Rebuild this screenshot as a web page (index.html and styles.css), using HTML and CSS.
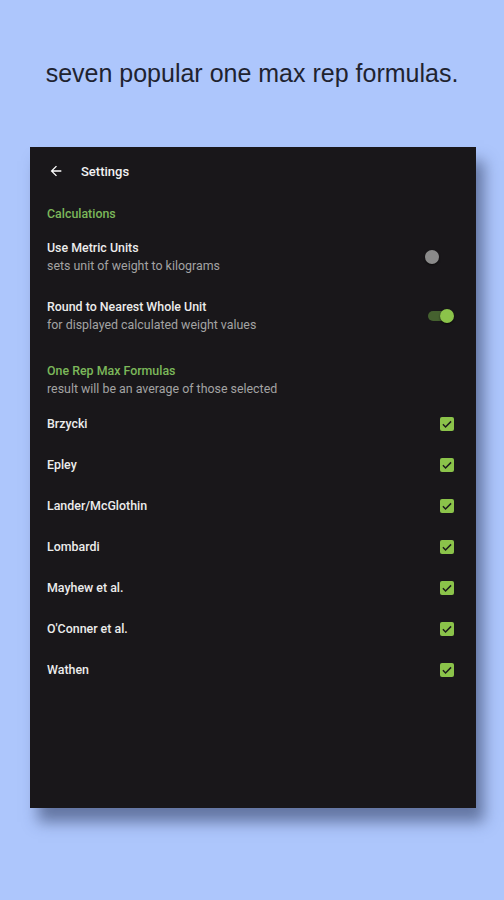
FILE: index.html
```html
<!DOCTYPE html>
<html>
<head>
<meta charset="utf-8">
<link rel="stylesheet" href="styles.css">
</head>
<body>
<div class="page">
  <h1 class="headline">seven popular one max rep formulas.</h1>
  <div class="screen">
    <div class="appbar">
      <svg class="back" width="16" height="16" viewBox="0 0 24 24"><path d="M20 11H7.83l5.59-5.59L12 4l-8 8 8 8 1.41-1.41L7.83 13H20v-2z" fill="#fff"/></svg>
      <span class="title">Settings</span>
    </div>
    <div class="category first">Calculations</div>
    <div class="pref">
      <div class="pref-text">
        <div class="pref-title">Use Metric Units</div>
        <div class="pref-sub">sets unit of weight to kilograms</div>
      </div>
      <div class="toggle"><span class="thumb"></span></div>
    </div>
    <div class="pref">
      <div class="pref-text">
        <div class="pref-title">Round to Nearest Whole Unit</div>
        <div class="pref-sub">for displayed calculated weight values</div>
      </div>
      <div class="toggle on"><span class="thumb"></span></div>
    </div>
    <div class="category second">
      <div>One Rep Max Formulas</div>
      <div class="cat-sub">result will be an average of those selected</div>
    </div>
    <div class="list">
      <div class="check-row"><span>Brzycki</span><span class="box"><svg viewBox="0 0 24 24"><path d="M5 12.5l4.5 4.5L19 7.5" fill="none" stroke="#1c1c1c" stroke-width="2.6"/></svg></span></div>
      <div class="check-row"><span>Epley</span><span class="box"><svg viewBox="0 0 24 24"><path d="M5 12.5l4.5 4.5L19 7.5" fill="none" stroke="#1c1c1c" stroke-width="2.6"/></svg></span></div>
      <div class="check-row"><span>Lander/McGlothin</span><span class="box"><svg viewBox="0 0 24 24"><path d="M5 12.5l4.5 4.5L19 7.5" fill="none" stroke="#1c1c1c" stroke-width="2.6"/></svg></span></div>
      <div class="check-row"><span>Lombardi</span><span class="box"><svg viewBox="0 0 24 24"><path d="M5 12.5l4.5 4.5L19 7.5" fill="none" stroke="#1c1c1c" stroke-width="2.6"/></svg></span></div>
      <div class="check-row"><span>Mayhew et al.</span><span class="box"><svg viewBox="0 0 24 24"><path d="M5 12.5l4.5 4.5L19 7.5" fill="none" stroke="#1c1c1c" stroke-width="2.6"/></svg></span></div>
      <div class="check-row"><span>O'Conner et al.</span><span class="box"><svg viewBox="0 0 24 24"><path d="M5 12.5l4.5 4.5L19 7.5" fill="none" stroke="#1c1c1c" stroke-width="2.6"/></svg></span></div>
      <div class="check-row"><span>Wathen</span><span class="box"><svg viewBox="0 0 24 24"><path d="M5 12.5l4.5 4.5L19 7.5" fill="none" stroke="#1c1c1c" stroke-width="2.6"/></svg></span></div>
    </div>
  </div>
</div>
</body>
</html>
```
FILE: styles.css
```css
html, body {
  margin: 0;
  padding: 0;
  background: #adc6fc;
}
.page {
  width: 504px;
  height: 900px;
  display: flex;
  flex-direction: column;
}
.headline {
  margin: 0;
  height: 147px;
  box-sizing: border-box;
  padding-top: 58px;
  text-align: center;
  font-family: "Liberation Sans", Arial, sans-serif;
  font-weight: normal;
  font-size: 25px;
  line-height: 30px;
  color: #1f2330;
}
.screen {
  margin-left: 30px;
  width: 446px;
  height: 661px;
  background: #19171a;
  box-shadow: 8px 14px 14px rgba(40, 52, 90, 0.55);
  font-family: Roboto, "Noto Sans", sans-serif;
  font-size: 12.4px;
  color: #ececec;
}
.appbar {
  height: 48px;
  display: flex;
  align-items: center;
  padding-left: 49px;
  position: relative;
}
.back {
  position: absolute;
  left: 18px;
  top: 16px;
}
.title {
  padding-left: 2px;
  font-size: 13px;
  font-weight: 500;
  color: #f2f2f2;
}
.category {
  padding-left: 17px;
  color: #7cb85a;
  font-weight: 500;
  line-height: 18px;
}
.category.first {
  padding-top: 10px;
}
.category.second {
  padding-top: 21px;
  padding-bottom: 6px;
}
.cat-sub {
  color: #a3a3a3;
  font-weight: normal;
  line-height: 17px;
}
.pref {
  display: flex;
  align-items: center;
  justify-content: space-between;
  padding: 16px 21px 7px 17px;
}
.pref-title {
  line-height: 18px;
  font-weight: 500;
}
.pref-sub {
  line-height: 18px;
  color: #a3a3a3;
}
.toggle {
  position: relative;
  width: 30px;
  height: 14px;
}
.thumb {
  position: absolute;
  left: 0;
  top: 0;
  width: 14px;
  height: 14px;
  border-radius: 50%;
  background: #8a8a8a;
  box-shadow: 0 1px 2px rgba(0,0,0,0.6);
}
.toggle.on::before {
  content: "";
  position: absolute;
  left: 3px;
  top: 2px;
  width: 24px;
  height: 10px;
  border-radius: 5px;
  background: #45612f;
}
.toggle.on .thumb {
  left: 15px;
  background: #8bc34a;
}
.list {
  display: flex;
  flex-direction: column;
}
.check-row {
  height: 41px;
  display: flex;
  align-items: center;
  justify-content: space-between;
  padding: 0 22px 0 17px;
  font-weight: 500;
}
.box {
  width: 14px;
  height: 14px;
  border-radius: 2px;
  background: #8bc34a;
  display: flex;
}
.box svg {
  width: 14px;
  height: 14px;
}
```
